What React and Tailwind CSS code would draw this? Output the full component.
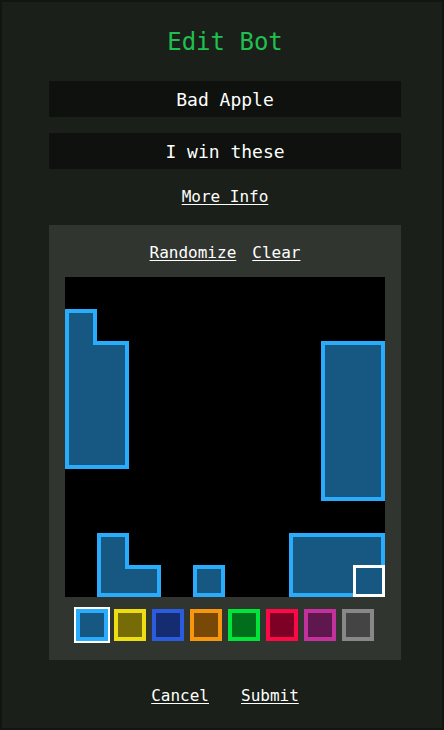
import React from "react";

const FILLED = [
  [0, 1], [0, 2], [1, 2], [0, 3], [1, 3], [0, 4], [1, 4], [0, 5], [1, 5],
  [8, 2], [9, 2], [8, 3], [9, 3], [8, 4], [9, 4], [8, 5], [9, 5], [8, 6], [9, 6],
  [1, 8], [1, 9], [2, 9],
  [4, 9],
  [7, 8], [8, 8], [9, 8], [7, 9], [8, 9], [9, 9],
];

const C = 32;
const B = 4;
const EDGE = "#2aacfc";
const FILL = "#175882";

function Grid() {
  const set = new Set(FILLED.map(([x, y]) => x + "," + y));
  const has = (x, y) => set.has(x + "," + y);
  const els = [];
  FILLED.forEach(([x, y], i) => {
    const px = x * C;
    const py = y * C;
    els.push(<rect key={"f" + i} x={px} y={py} width={C} height={C} fill={FILL} />);
    if (!has(x, y - 1)) els.push(<rect key={"t" + i} x={px} y={py} width={C} height={B} fill={EDGE} />);
    if (!has(x, y + 1)) els.push(<rect key={"b" + i} x={px} y={py + C - B} width={C} height={B} fill={EDGE} />);
    if (!has(x - 1, y)) els.push(<rect key={"l" + i} x={px} y={py} width={B} height={C} fill={EDGE} />);
    if (!has(x + 1, y)) els.push(<rect key={"r" + i} x={px + C - B} y={py} width={B} height={C} fill={EDGE} />);
    const corners = [
      [-1, -1, px, py],
      [1, -1, px + C - B, py],
      [-1, 1, px, py + C - B],
      [1, 1, px + C - B, py + C - B],
    ];
    corners.forEach(([dx, dy, cx, cy], j) => {
      if (has(x + dx, y) && has(x, y + dy) && !has(x + dx, y + dy)) {
        els.push(<rect key={"c" + i + "-" + j} x={cx} y={cy} width={B} height={B} fill={EDGE} />);
      }
    });
  });
  return (
    <svg width="320" height="320" viewBox="0 0 320 320" className="block bg-black">
      <rect x="0" y="0" width="320" height="320" fill="#000" />
      {els}
      <rect x={9 * C + 1.5} y={9 * C + 1.5} width={C - 3} height={C - 3} fill={FILL} stroke="#ffffff" strokeWidth="3" />
    </svg>
  );
}

const SWATCHES = [
  { b: "border-[#2aacfc]", f: "bg-[#175882]", sel: true },
  { b: "border-[#eedd11]", f: "bg-[#756c08]" },
  { b: "border-[#2b5ce0]", f: "bg-[#152d70]" },
  { b: "border-[#f8960e]", f: "bg-[#784806]" },
  { b: "border-[#00e53a]", f: "bg-[#006e1a]" },
  { b: "border-[#ff0846]", f: "bg-[#7d0025]" },
  { b: "border-[#c3329c]", f: "bg-[#5f184e]" },
  { b: "border-[#888888]", f: "bg-[#444444]" },
];

export default function App() {
  return (
    <div
      className="w-full h-[730px] bg-[#1a1f19] border-2 border-[#121612] pl-[6px] flex flex-col items-center text-white"
      style={{ fontFamily: '"DejaVu Sans Mono", "Liberation Mono", monospace' }}
    >
      <h1 className="mt-[24px] text-[24px] leading-[32px] text-[#20c050]">Edit Bot</h1>
      <div className="mt-[23px] w-[352px] h-[36px] bg-[#0e110d] flex items-center justify-center text-[18px]">
        Bad Apple
      </div>
      <div className="mt-[16px] w-[352px] h-[36px] bg-[#0e110d] flex items-center justify-center text-[18px]">
        I win these
      </div>
      <div className="mt-[16px] h-[24px] leading-[24px] text-[16px] underline underline-offset-2">More Info</div>
      <div className="mt-[16px] w-[352px] bg-[#31352f] flex flex-col items-center pt-[16px] pb-[19px]">
        <div className="flex gap-[16px] text-[16px] leading-[24px] underline underline-offset-2">
          <span>Randomize</span>
          <span>Clear</span>
        </div>
        <div className="mt-[12px]">
          <Grid />
        </div>
        <div className="mt-[12px] flex gap-[6px]">
          {SWATCHES.map((s, i) => (
            <div
              key={i}
              className={
                "w-8 h-8 border-4 " +
                s.b +
                " " +
                s.f +
                (s.sel ? " outline-2 outline-white outline-solid" : "")
              }
            />
          ))}
        </div>
      </div>
      <div className="mt-[24px] flex gap-[32px] text-[16px] leading-[24px] underline underline-offset-2">
        <span>Cancel</span>
        <span>Submit</span>
      </div>
    </div>
  );
}
